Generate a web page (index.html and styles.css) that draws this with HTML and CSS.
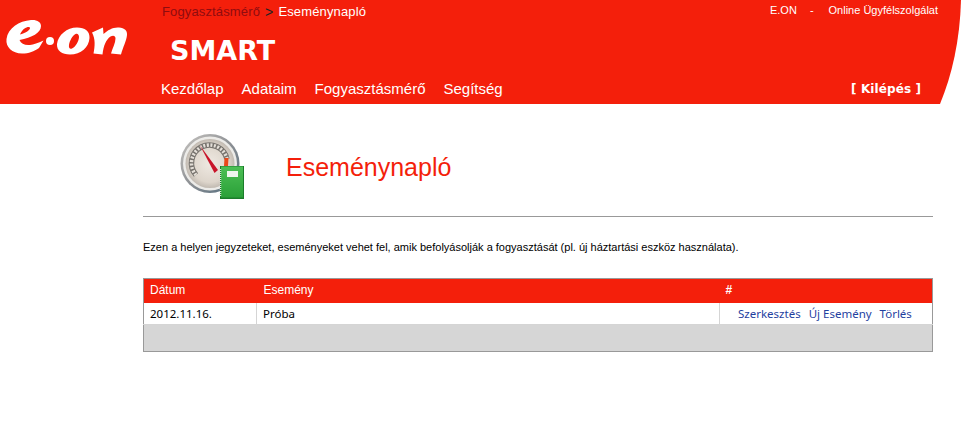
FILE: index.html
```html
<!DOCTYPE html>
<html lang="hu">
<head>
<meta charset="utf-8">
<title>Eseménynapló</title>
<link rel="stylesheet" href="styles.css">
</head>
<body>
<header class="header">
  <a class="logo" href="#" aria-label="E.ON">
    <svg width="130" height="40" viewBox="0 0 130 40">
      <path fill="#fff" fill-rule="evenodd" d="M6.500 24C8 13 19 6 31 5C37 4.500 41 7 41 11C41 18 32 22.500 19.500 25C21 29 25 30.500 30 30C33.500 29.500 38 28 43.500 25.500L39 33C34 36.500 29 38.500 22 38.500C12 38.500 5.500 32 6.500 24ZM20 19.500C25 18 30 15.500 30 13C30 10.500 23 12 20 19.500Z"/>
      <circle fill="#fff" cx="50" cy="26" r="4"/>
      <path fill="#fff" fill-rule="evenodd" d="M57 29C58 20 67 12.500 77 12.500C85 12.500 90 16.500 89.500 23C89 32 81 39.500 70 39.500C62 39.500 56.500 35.500 57 29ZM69 30C68.500 33 70 34.500 72 33.500C75.500 32 79 26 79 22C79 19.500 77.500 18 75.500 19C72.500 20.500 69.500 26 69 30Z"/>
      <path fill="#fff" d="M92 17.500L103 12.500L103.500 19C108 15 113 12 119 12.500C124.500 13 127.500 15.500 127 20C126.500 26 123 32 121 39.500L111 38.500C112.500 33 115.500 28 115.500 23.500C115.500 20.500 113 20 110.500 21.500C106 24.500 103.500 31 102.500 39.500L93.500 38.500C95 31 95.500 24 92 17.500Z"/>
    </svg>
  </a>
  <div class="header-main">
    <div class="topline">
      <nav class="crumbs"><a class="crumb-link" href="#">Fogyasztásmérő</a><span class="crumb-sep">&gt;</span><span>Eseménynapló</span></nav>
      <nav class="toplinks"><a href="#">E.ON</a><span>-</span><a href="#">Online Ügyfélszolgálat</a></nav>
    </div>
    <div class="brand">SMART</div>
    <div class="navline">
      <nav class="menu"><a href="#">Kezdőlap</a><a href="#">Adataim</a><a href="#">Fogyasztásmérő</a><a href="#">Segítség</a></nav>
      <a class="logout" href="#">[ Kilépés ]</a>
    </div>
  </div>
</header>
<main class="content">
  <div class="title-row">
    <svg class="title-icon" width="66" height="66" viewBox="0 0 66 66">
      <defs>
        <linearGradient id="rim" x1="0" y1="0" x2="1" y2="1">
          <stop offset="0" stop-color="#c9c6c2"/><stop offset=".5" stop-color="#8d9094"/><stop offset="1" stop-color="#4f6a7c"/>
        </linearGradient>
        <radialGradient id="face" cx=".5" cy=".5" r=".55">
          <stop offset="0" stop-color="#efe9e2"/><stop offset=".7" stop-color="#ddd5cb"/><stop offset="1" stop-color="#b5aea6"/>
        </radialGradient>
        <linearGradient id="book" x1="0" y1="0" x2="0" y2="1">
          <stop offset="0" stop-color="#4cbf55"/><stop offset="1" stop-color="#2aa038"/>
        </linearGradient>
      </defs>
      <circle cx="30" cy="29.500" r="29.500" fill="url(#rim)"/>
      <circle cx="30" cy="29.500" r="27" fill="#ecebe8"/>
      <circle cx="30" cy="29.500" r="24.500" fill="url(#face)"/>
      <path d="M16 41A18 18 0 1 1 47 25" fill="none" stroke="#77736e" stroke-width="5.500"/>
      <path d="M16 41A18 18 0 1 1 47 25" fill="none" stroke="#e4dfd8" stroke-width="3.500" stroke-dasharray="2 1.500"/>
      <path d="M46.500 24L46 32" fill="none" stroke="#e8481a" stroke-width="4"/>
      <path d="M20 11.500L38 36 34.500 39Z" fill="#c8142a"/>
      <rect x="40" y="32" width="24" height="33" fill="#1b7d2b"/>
      <rect x="41" y="32.500" width="22" height="31" fill="url(#book)"/>
      <path d="M40.500 35v28" stroke="#d5e8d5" stroke-width="1.500" stroke-dasharray="1 1"/>
      <rect x="47" y="37" width="11" height="6" fill="#eef5ee"/>
    </svg>
    <h1 class="title">Eseménynapló</h1>
  </div>
  <p class="intro">Ezen a helyen jegyzeteket, eseményeket vehet fel, amik befolyásolják a fogyasztását (pl. új háztartási eszköz használata).</p>
  <table class="events">
    <thead>
      <tr><th class="col-date">Dátum</th><th class="col-event">Esemény</th><th class="col-actions">#</th></tr>
    </thead>
    <tbody>
      <tr>
        <td>2012.11.16.</td>
        <td>Próba</td>
        <td class="actions"><a href="#">Szerkesztés</a><a href="#">Új Esemény</a><a href="#">Törlés</a></td>
      </tr>
    </tbody>
    <tfoot><tr><td colspan="3"></td></tr></tfoot>
  </table>
</main>
</body>
</html>
```
FILE: styles.css
```css
* { box-sizing: border-box; }
html, body { margin: 0; background: #fff; }
body { font-family: "Liberation Sans", Arial, sans-serif; color: #000; height: 421px; overflow: hidden; }
a { color: inherit; text-decoration: none; }

.header {
  width: 961px;
  height: 104px;
  background: #f41f0b;
  color: #fff;
  display: flex;
  clip-path: path("M0 0H961C960 40 952 75 940 104H0Z");
}
.logo { width: 161px; padding-top: 15px; flex: none; display: block; }
.logo svg { display: block; }
.header-main { flex: 1; display: flex; flex-direction: column; padding-right: 23px; }
.topline { display: flex; justify-content: space-between; height: 34px; padding-top: 4px; font-size: 11px; }
.crumbs { display: flex; font-size: 13px; padding-left: 1px; line-height: 16px; letter-spacing: .14px; }
.crumb-link { color: #8f0c10; }
.crumb-sep { color: #222; margin: 0 5px; font-size: 14px; }
.toplinks { display: flex; line-height: 12px; }
.toplinks span { margin: 0 15px 0 13px; }
.brand { font-size: 27px; font-weight: 700; padding-left: 9px; line-height: 34px; height: 46px; font-family: "DejaVu Sans", sans-serif; }
.navline { display: flex; justify-content: space-between; align-items: center; font-size: 15px; line-height: 18px; }
.menu { display: flex; gap: 18px; }
.logout { font-family: "DejaVu Sans", sans-serif; font-size: 12px; font-weight: 700; margin-right: 17px; letter-spacing: .1px; }

.content { margin-left: 143px; width: 790px; }
.title-row { display: flex; align-items: center; height: 113px; border-bottom: 1px solid #999; padding: 14px 0 0 37px; }
.title-icon { flex: none; }
.title { margin: 0 0 0 40px; font-size: 25px; font-weight: 400; color: #f41f0b; }
.intro { margin: 24px 0 0; font-size: 11px; line-height: 13px; }

.events {
  width: 790px;
  margin-top: 24px;
  border-collapse: collapse;
  border: 1px solid #999;
  table-layout: fixed;
  font-family: "Noto Sans", sans-serif;
  font-size: 11.500px;
}
.col-date { width: 113px; }
.col-event { width: 463px; }
.events th { background: #f41f0b; color: #fff; font-weight: 400; text-align: left; height: 24px; padding: 0 6px 1px; font-size: 12px; font-family: "Liberation Sans", sans-serif; }
.events th.col-event { padding-left: 7px; }
.events th.col-actions { font-weight: 700; padding-left: 6px; }
.events tbody td { height: 22px; padding: 0 6px; border-right: 1px solid #d5d5d5; border-bottom: 1px solid #d5d5d5; }
.events tbody td:last-child { border-right: 0; }
.events tbody td.actions { padding-left: 18px; color: #1f3f9f; white-space: nowrap; }
.actions a + a { margin-left: 8px; }
.events tfoot td { background: #d6d6d6; height: 27px; }
```
